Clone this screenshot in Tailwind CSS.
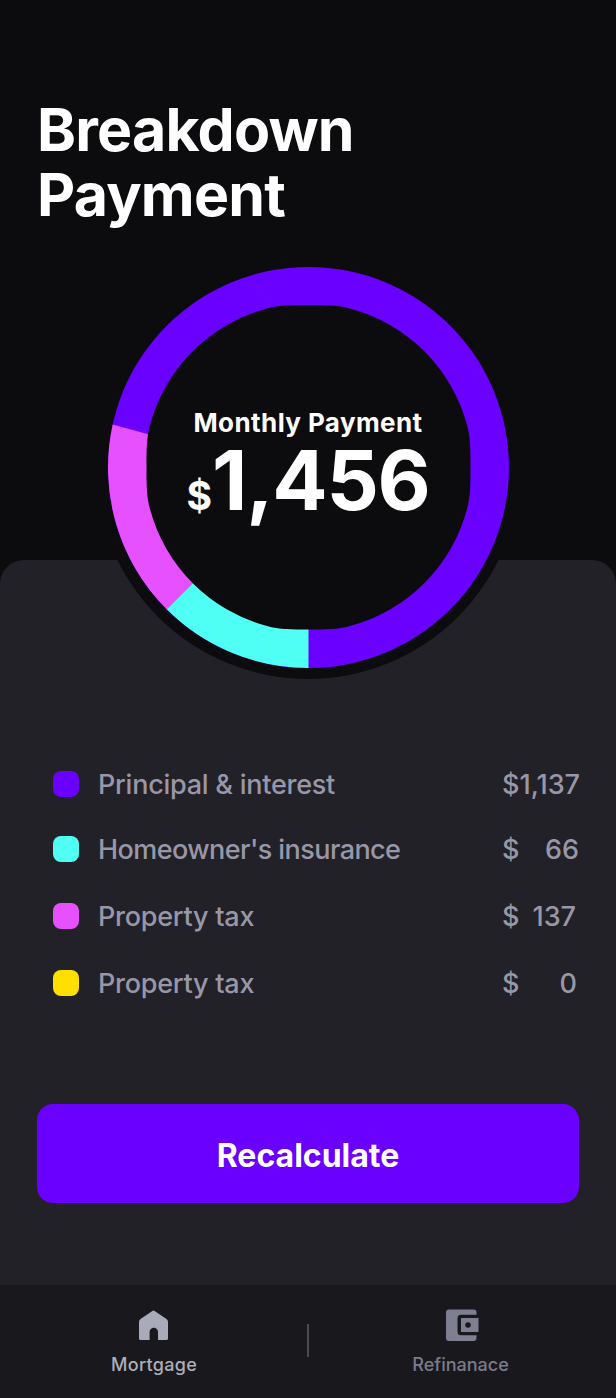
<!DOCTYPE html>
<html lang="en">

<head>
    <meta charset="UTF-8">
    <meta name="viewport" content="width=device-width, initial-scale=1.0">
    <title>Breakdown Payment</title>
    <script src="https://cdn.jsdelivr.net/npm/@tailwindcss/browser@4"></script>
</head>

<body class="bg-[#0c0c0e] h-[1398px] flex flex-col font-['Inter',sans-serif] text-white overflow-x-hidden">
    <!-- Header -->
    <header class="relative h-[560px] shrink-0 pt-[97px] pl-[37px]">
        <h1 class="text-[59px] leading-[65px] font-bold tracking-[-0.8px]">Breakdown<br>Payment</h1>

        <!-- Payment chart, hangs over the panel below -->
        <div class="absolute left-[96px] top-[255px] size-[424px] z-10">
            <svg viewBox="96 255 424 424" class="block size-full">
                <circle cx="308" cy="467" r="212" fill="#0c0c0e" />
                <circle cx="308.500" cy="467.500" r="200.500" fill="#6a00ff" />
                <path d="M308.500 467.500L160 437.500L112.700 424.500A200.500 200.500 0 0 0 166.700 609.300Z" fill="#e650ff" />
                <path d="M308.500 467.500L166.700 609.300A200.500 200.500 0 0 0 308.500 668Z" fill="#50fff3" />
                <path d="M308.500 305C325 305 338 305 350 308.500A165 165 0 0 1 467 425C470.500 437 470.500 450 470.500 467C470.500 484 470.500 497 467 509A165 165 0 0 1 350 626C338 629.500 325 629.500 308.500 629.500C292 629.500 279 629.500 267 626A165 165 0 0 1 150 509C146.500 497 146.500 484 146.500 467C146.500 450 146.500 437 150 425A165 165 0 0 1 267 308.500C279 305 292 305 308.500 305Z" fill="#0c0c0e" />
            </svg>
            <div class="absolute inset-x-0 top-[150px] text-center">
                <p class="text-[26px] leading-[36px] font-bold tracking-[0.4px]">Monthly Payment</p>
                <p class="leading-[80px] font-bold flex justify-center items-baseline">
                    <span class="text-[39px]">$</span>
                    <span class="text-[82px] tracking-[-1.3px]">1,456</span>
                </p>
            </div>
        </div>
    </header>

    <!-- Breakdown list -->
    <main class="h-[725px] shrink-0 bg-[#222127] rounded-t-[24px] px-[37px] pt-[211px]">
        <ul class="pl-4 text-[27px] leading-[28px] font-medium text-[#9997a7]">
            <li class="flex h-[26px]">
                <i class="size-[26px] rounded-lg bg-[#6a00ff] mr-[19px]"></i>
                <span class="tracking-[-0.25px]">Principal &amp; interest</span>
                <span class="ml-auto flex w-[77px]">$1,137</span>
            </li>
            <li class="flex h-[26px] mt-[39px]">
                <i class="size-[26px] rounded-lg bg-[#50fff3] mr-[19px]"></i>
                <span class="tracking-[-0.57px]">Homeowner's insurance</span>
                <span class="ml-auto flex justify-between w-[77px]"><span>$</span><span>66</span></span>
            </li>
            <li class="flex h-[26px] mt-[41px]">
                <i class="size-[26px] rounded-lg bg-[#e650ff] mr-[19px]"></i>
                <span class="tracking-[-0.25px]">Property tax</span>
                <span class="ml-auto flex justify-between w-[77px] pr-[3px]"><span>$</span><span>137</span></span>
            </li>
            <li class="flex h-[26px] mt-[41px]">
                <i class="size-[26px] rounded-lg bg-[#ffdf00] mr-[19px]"></i>
                <span class="tracking-[-0.25px]">Property tax</span>
                <span class="ml-auto flex justify-between w-[77px] pr-[2px]"><span>$</span><span>0</span></span>
            </li>
        </ul>
        <button class="mt-[108px] h-[99px] w-full rounded-2xl bg-[#6a00ff] pt-[5px] text-[32px] font-bold">Recalculate</button>
    </main>

    <!-- Bottom navigation -->
    <nav class="h-[113px] shrink-0 bg-[#19181d] flex">
        <a class="w-[307px] flex flex-col items-center pt-[20px] pl-px text-[18px] leading-6 font-medium tracking-[0.3px] text-[#adaebb]">
            <svg viewBox="0 0 40 40" class="size-10 mb-2" fill="#a9abb9">
                <path d="M18 6.200Q19.500 5 21 6.200L32.500 14Q34 15 34 17V33.500Q34 35 32.500 35H24V27A4.200 4.200 0 0 0 15.600 27V35H6.500Q5 35 5 33.500V17Q5 15 6.500 14Z" />
            </svg>
            Mortgage
        </a>
        <div class="w-[2px] h-[33px] mt-[39px] bg-[#4b4a52]"></div>
        <a class="w-[307px] flex flex-col items-center pt-[20px] pr-[4px] text-[18px] leading-6 font-medium text-[#7b7b8b]">
            <svg viewBox="0 0 40 40" class="size-10 mb-2" fill="#7e8091">
                <path d="M8 4.500H32.500Q35.500 4.500 35.500 7.500V9.800H20Q16.500 9.800 16.500 13.300V26.700Q16.500 30.200 20 30.200H35.500V33Q35.500 36 32.500 36H8Q5 36 5 33V7.500Q5 4.500 8 4.500Z" />
                <path fill-rule="evenodd" d="M20 13H37.500V27H20ZM27 17.200A2.800 2.800 0 1 0 27 22.800A2.800 2.800 0 1 0 27 17.200Z" />
            </svg>
            Refinanace
        </a>
    </nav>
</body>

</html>
